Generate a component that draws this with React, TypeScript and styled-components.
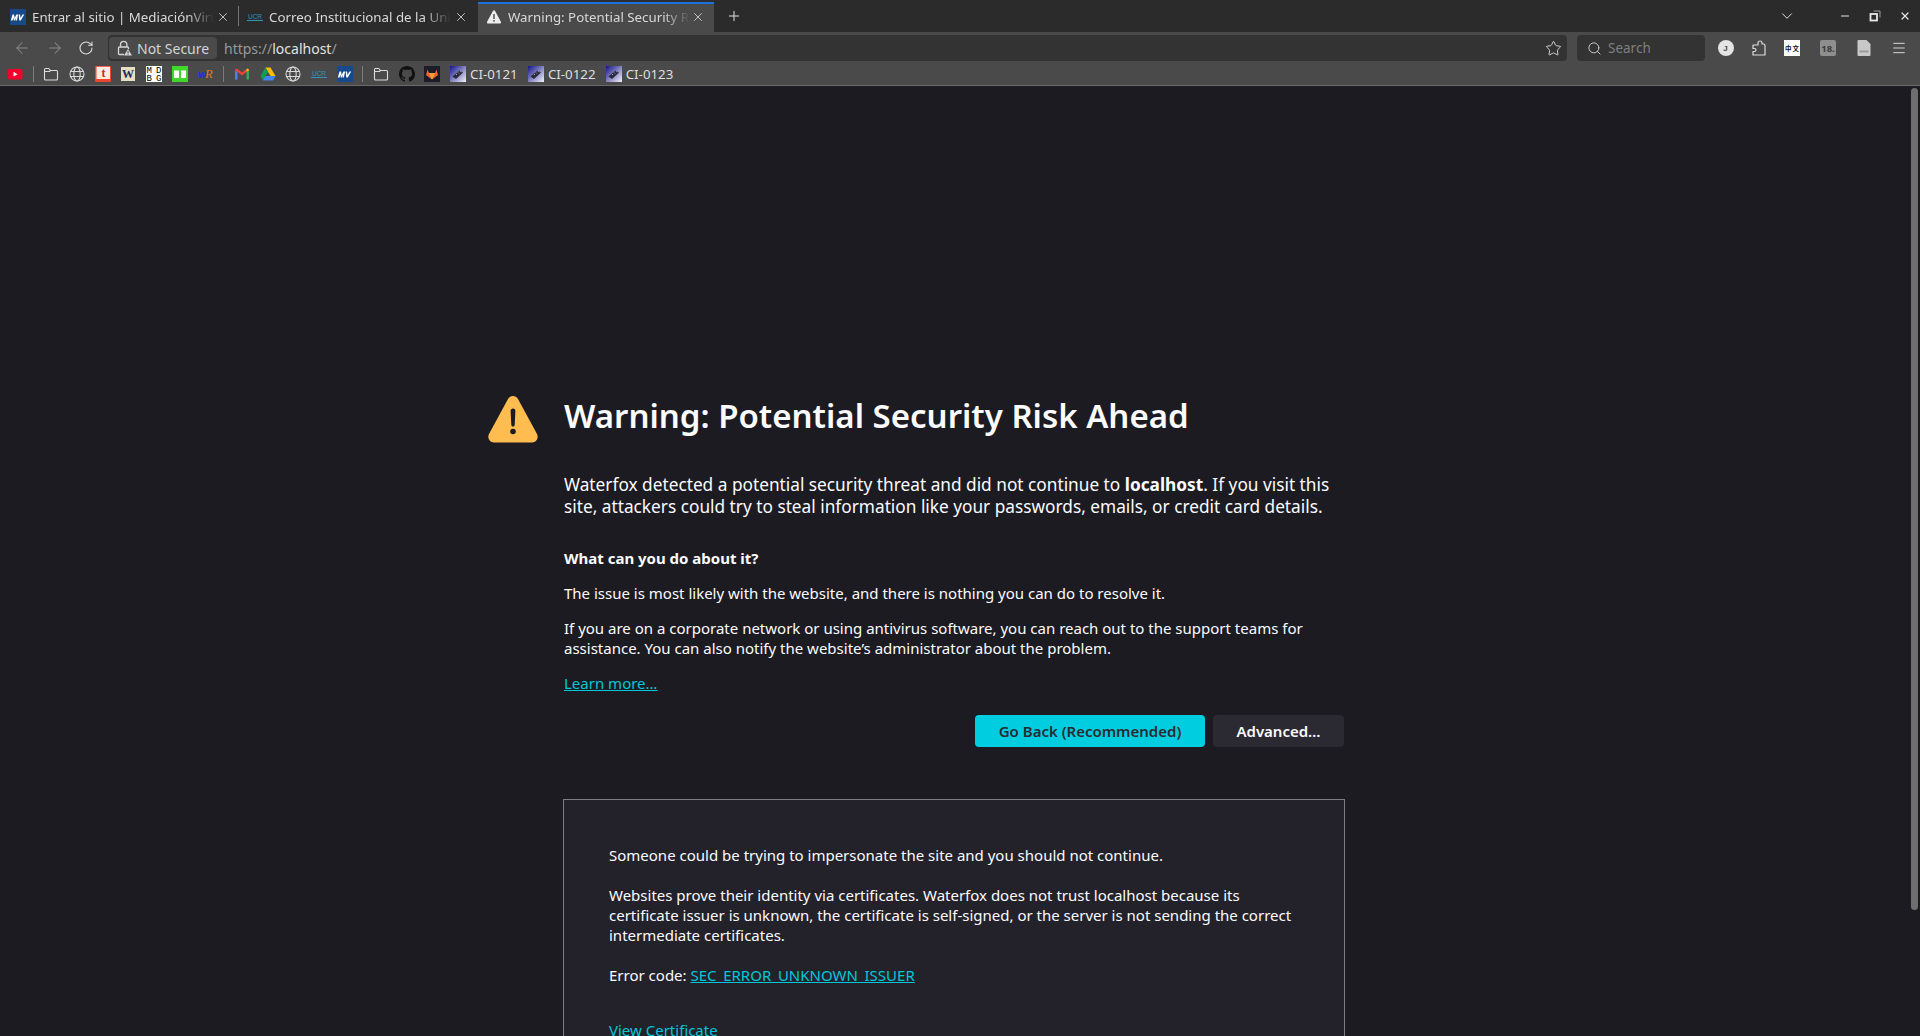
import * as React from "react";
import styled, { createGlobalStyle } from "styled-components";
import { ArrowLeft, ArrowRight, RotateCw, Star, Search, Menu, Plus, X, ChevronDown, Minus } from "lucide-react";

const GlobalStyle = createGlobalStyle`
  html, body { margin: 0; padding: 0; background: #1c1b22; }
  body { font-family: "Noto Sans", "Liberation Sans", sans-serif; }
  * { box-sizing: border-box; }
`;

const Window = styled.div`
  width: 1920px;
  height: 1036px;
  overflow: hidden;
  display: flex;
  flex-direction: column;
  background: #1c1b22;
`;

/* ---- tab strip ---- */
const TabStrip = styled.div`
  height: 32px;
  flex: none;
  display: flex;
  align-items: stretch;
  background: #2b2b2b;
  color: #d6d6d6;
  font-size: 13.3px;
`;

const Tab = styled.div<{ $active?: boolean; $w: number; $pl: number }>`
  width: ${({ $w }) => $w}px;
  padding-left: ${({ $pl }) => $pl}px;
  padding-bottom: 2px;
  display: flex;
  align-items: center;
  gap: 6px;
  flex: none;
  margin-top: 2px;
  background: ${({ $active }) => ($active ? "#4a4a4a" : "transparent")};
  border-top: 2px solid ${({ $active }) => ($active ? "#1a73e0" : "transparent")};
`;

const TabTitle = styled.span<{ $w: number }>`
  width: ${({ $w }) => $w}px;
  white-space: nowrap;
  overflow: hidden;
  flex: none;
  color: #d8d8d8;
  mask-image: linear-gradient(to right, #000 85%, transparent);
`;

const TabClose = styled.span<{ $ml: number }>`
  display: flex;
  margin-left: ${({ $ml }) => $ml}px;
  color: #d0d0d0;
`;

const TabDivider = styled.div`
  width: 1px;
  height: 20px;
  align-self: center;
  margin-right: 8px;
  background: #777;
  flex: none;
`;

const NewTab = styled.div`
  margin-left: 12px;
  display: flex;
  align-items: center;
  color: #e0e0e0;
`;

const WindowControls = styled.div`
  margin-left: auto;
  display: flex;
  align-items: center;
  color: #e4e4e4;
`;

const ControlSlot = styled.span<{ $mr?: number }>`
  width: 30px;
  margin-right: ${({ $mr }) => $mr ?? 0}px;
  display: flex;
  justify-content: center;
`;

/* ---- nav bar ---- */
const NavBar = styled.div`
  height: 32px;
  flex: none;
  display: flex;
  align-items: center;
  background: #4a4a4a;
  color: #d8d8d8;
`;

const NavButton = styled.span<{ $dim?: boolean; $w: number }>`
  width: ${({ $w }) => $w}px;
  display: flex;
  justify-content: center;
  flex: none;
  color: ${({ $dim }) => ($dim ? "#8a8a8a" : "#dcdcdc")};
`;

const UrlBar = styled.div`
  width: 1459px;
  height: 26px;
  margin-left: 2px;
  flex: none;
  display: flex;
  align-items: center;
  padding: 0 5px 0 1px;
  border-radius: 4px;
  background: #333333;
  font-size: 14px;
`;

const SecurityChip = styled.div`
  width: 108px;
  height: 22px;
  display: flex;
  align-items: center;
  gap: 5px;
  padding-left: 8px;
  border-radius: 4px;
  background: #4a4a4a;
  color: #d4d4d4;
  flex: none;
`;

const UrlText = styled.div`
  margin-left: 7px;
  color: #9a9a9a;
  flex: 1;
  b { font-weight: 400; color: #e2e2e2; }
`;

const SearchBox = styled.div`
  width: 128px;
  height: 26px;
  margin-left: 10px;
  flex: none;
  display: flex;
  align-items: center;
  gap: 6px;
  padding-left: 10px;
  border-radius: 4px;
  background: #333333;
  color: #7f7f7f;
  font-size: 13.5px;
  svg { color: #d0d0d0; }
`;

const ToolbarIcons = styled.div`
  display: flex;
  align-items: center;
  margin-left: 13px;
`;

const ToolbarSlot = styled.span<{ $mr: number }>`
  display: flex;
  margin-right: ${({ $mr }) => $mr}px;
  flex: none;
`;

/* ---- bookmarks ---- */
const BookmarkBar = styled.div`
  height: 22px;
  flex: none;
  display: flex;
  align-items: center;
  gap: 9.7px;
  padding: 0 0 2px 7px;
  background: #4a4a4a;
  border-bottom: 1px solid #6b6b6b;
`;

const BookmarkSep = styled.span`
  width: 1px;
  height: 16px;
  background: #7c7c7c;
  flex: none;
`;

const NamedBookmark = styled.span`
  display: flex;
  align-items: center;
  gap: 4px;
  margin-right: 0.5px;
  font-size: 13.3px;
  color: #dedede;
`;

/* ---- page content ---- */
const ContentRow = styled.div`
  flex: 1;
  min-height: 0;
  display: flex;
`;

const Page = styled.main`
  flex: 1;
  min-width: 0;
  padding-top: 306px;
  display: flex;
  justify-content: center;
  color: #fbfbfe;
`;

const Column = styled.div`
  width: 780px;
  font-size: 15px;
  line-height: 20px;
`;

const TitleRow = styled.div`
  display: flex;
  align-items: center;
  gap: 26px;
  margin-left: -76px;
`;

const WarningSlot = styled.span`
  display: flex;
  flex: none;
  margin: 4px 0 -3px;
`;

const Title = styled.h1`
  margin: 0;
  font-size: 33px;
  line-height: 40px;
  font-weight: 600;
  color: #fbfbfe;
`;

const Intro = styled.p`
  margin: 34px 0 0;
  font-size: 17.25px;
  line-height: 22px;
  b { font-weight: 700; }
`;

const Heading = styled.p`
  margin: 30px 0 0;
  font-weight: 700;
`;

const Para = styled.p`
  margin: 15px 0 0;
`;

const Link = styled.a`
  color: #00c8d8;
  text-decoration: underline;
`;

const PlainLink = styled.a`
  color: #00c8d8;
`;

const ButtonRow = styled.div`
  margin-top: 22px;
  display: flex;
  justify-content: flex-end;
  gap: 8px;
`;

const Button = styled.button<{ $primary?: boolean; $w: number }>`
  width: ${({ $w }) => $w}px;
  height: 32px;
  border: none;
  border-radius: 4px;
  font-family: inherit;
  font-size: 15px;
  font-weight: 600;
  background: ${({ $primary }) => ($primary ? "#00cde0" : "#2b2a33")};
  color: ${({ $primary }) => ($primary ? "#2b2a33" : "#fbfbfe")};
`;

const Panel = styled.section`
  margin: 52px -1px 0;
  padding: 45px;
  border: 1px solid #7f7e85;
  background: #23222b;
`;

const PanelPara = styled.p<{ $mt?: number }>`
  margin: ${({ $mt }) => $mt ?? 20}px 0 0;
`;

const ScrollTrack = styled.div`
  width: 12px;
  flex: none;
  padding: 2px 2px 0 3px;
`;

const ScrollThumb = styled.div`
  height: 822px;
  border-radius: 4px;
  background: #6e6e6e;
`;

/* ---- drawn icons ---- */
const MvIcon = () => (
  <svg width="16" height="16" viewBox="0 0 16 16">
    <rect width="16" height="16" fill="#164a8c" />
    <path d="M.800 11.500l1.700-6h1.600l.5 3.400 1.900-3.400h1.600l-1.200 6H5.500l.6-2.700-1.400 2.700H3.800l-.4-2.700-.9 2.700zM8.600 5.500h1.500l.4 3.500 2-3.500h1.700l-3.400 6H9.300z" fill="#fff" />
  </svg>
);

const UcrIcon = () => (
  <svg width="16" height="16" viewBox="0 0 16 16">
    <text x="8" y="10" textAnchor="middle" fontSize="6.500" fontFamily="Liberation Sans" fill="#2f95bd">UCR</text>
    <rect x="0" y="11" width="16" height="1" fill="#2f95bd" />
  </svg>
);

const WarningGlyph = () => (
  <svg width="16" height="16" viewBox="0 0 16 16">
    <path d="M8 1.200c.5 0 .9.300 1.100.7l5.800 10.800c.4.800-.1 1.800-1.100 1.800H2.200c-1 0-1.500-1-1.100-1.800L6.900 1.900c.2-.4.600-.7 1.100-.7z" fill="#ededed" />
    <rect x="7.300" y="5" width="1.400" height="5" fill="#4a4a4a" />
    <circle cx="8" cy="11.800" r=".9" fill="#4a4a4a" />
  </svg>
);

const LockIcon = () => (
  <svg width="15" height="16" viewBox="0 0 15 16" fill="none">
    <path d="M3.500 7V4.500a3.200 3.200 0 0 1 6.400 0V7" stroke="#d6d6d6" strokeWidth="1.300" />
    <path d="M7 14.500H2.500a1 1 0 0 1-1-1V8a1 1 0 0 1 1-1h8a1 1 0 0 1 1 1v1" stroke="#d6d6d6" strokeWidth="1.300" />
    <path d="M11 9l4 6.500H7z" fill="#d6d6d6" />
    <rect x="10.600" y="11" width=".9" height="2.300" fill="#333" />
    <rect x="10.600" y="13.800" width=".9" height=".9" fill="#333" />
  </svg>
);

const FolderIcon = () => (
  <svg width="16" height="16" viewBox="0 0 16 16" fill="none" stroke="#dcdcdc" strokeWidth="1.100">
    <path d="M1.500 13V3.500a1 1 0 0 1 1-1h3.200l1.800 2h6a1 1 0 0 1 1 1V13a1 1 0 0 1-1 1h-11a1 1 0 0 1-1-1z" />
    <path d="M1.500 5.500h5l1-1" />
  </svg>
);

const GlobeIcon = () => (
  <svg width="16" height="16" viewBox="0 0 16 16" fill="none" stroke="#d8d8d8" strokeWidth="1.100">
    <circle cx="8" cy="8" r="7" />
    <ellipse cx="8" cy="8" rx="3.200" ry="7" />
    <path d="M1.500 5.500h13M1.500 10.500h13" />
  </svg>
);

const YoutubeIcon = () => (
  <svg width="16" height="16" viewBox="0 0 16 16">
    <rect x="0.500" y="3" width="15" height="10.500" rx="2.500" fill="#f5002b" />
    <path d="M6.500 5.800l4 2.400-4 2.400z" fill="#fff" />
  </svg>
);

const TumblrBook = () => (
  <svg width="16" height="16" viewBox="0 0 16 16">
    <rect x="0" y="0" width="16" height="16" rx="1" fill="#e9452f" />
    <rect x="1.500" y="0.800" width="13.500" height="12.200" fill="#f8ece2" />
    <text x="8.500" y="11" textAnchor="middle" fontSize="12" fontWeight="700" fontFamily="Liberation Serif" fill="#c8281c">t</text>
  </svg>
);

const WikiIcon = () => (
  <svg width="16" height="16" viewBox="0 0 16 16">
    <rect x="1" y="1" width="14" height="14" fill="#e6dfc0" />
    <text x="8" y="12" textAnchor="middle" fontSize="12" fontWeight="700" fontFamily="Liberation Serif" fill="#20286a">W</text>
  </svg>
);

const MdbgIcon = () => (
  <svg width="16" height="16" viewBox="0 0 16 16">
    <rect width="16" height="16" fill="#fff" />
    <text x="8" y="7" textAnchor="middle" fontSize="9" fontFamily="Liberation Mono" textLength="15" fill="#000">MD</text>
    <text x="8" y="15" textAnchor="middle" fontSize="9" fontFamily="Liberation Mono" textLength="15" fill="#000">BG</text>
  </svg>
);

const GreenIcon = () => (
  <svg width="16" height="16" viewBox="0 0 16 16">
    <rect width="16" height="16" fill="#3fd82a" />
    <rect x="2" y="4.500" width="5" height="7.500" fill="#fff" />
    <rect x="9" y="4.500" width="5" height="7.500" fill="#fff" />
  </svg>
);

const WrIcon = () => (
  <svg width="16" height="16" viewBox="0 0 16 16">
    <text x="0" y="12" fontSize="10.500" fontWeight="700" fontStyle="italic" fontFamily="Liberation Sans" fill="#2030e0">w</text>
    <text x="7" y="12" fontSize="12.500" fontStyle="italic" fontFamily="Liberation Serif" fill="#e07a20">R</text>
  </svg>
);

const GmailIcon = () => (
  <svg width="16" height="16" viewBox="0 0 16 16">
    <path d="M1 13.500V4.200L3.500 6v7.500z" fill="#4285f4" />
    <path d="M12.500 13.500V6L15 4.200v9.300z" fill="#34a853" />
    <path d="M1 4.200C1 2.800 2.500 2.200 3.500 3L8 6.500 12.500 3C13.500 2.200 15 2.800 15 4.200L12.500 6 8 9.500 3.500 6z" fill="#ea4335" />
    <path d="M12.500 3C13.500 2.200 15 2.800 15 4.200L12.500 6z" fill="#fbbc04" />
  </svg>
);

const DriveIcon = () => (
  <svg width="16" height="16" viewBox="0 0 16 16">
    <path d="M5.500 1.500h5L15.500 10h-5z" fill="#fbbc04" />
    <path d="M5.500 1.500L.5 10 3 14.500 8 6z" fill="#0f9d58" />
    <path d="M3 14.500h10L15.500 10H5.500z" fill="#4285f4" />
  </svg>
);

const GithubIcon = () => (
  <svg width="16" height="16" viewBox="0 0 16 16">
    <path
      fill="#111"
      d="M8 0C3.580 0 0 3.580 0 8c0 3.540 2.290 6.530 5.470 7.590.4.070.55-.17.55-.38 0-.19-.01-.82-.01-1.490-2.010.37-2.530-.49-2.690-.94-.09-.23-.48-.94-.82-1.130-.28-.15-.68-.52-.01-.53.630-.01 1.080.58 1.230.82.720 1.210 1.870.87 2.330.66.070-.52.280-.87.510-1.070-1.780-.2-3.640-.89-3.640-3.950 0-.87.310-1.590.820-2.150-.08-.2-.36-1.020.08-2.120 0 0 .67-.21 2.200.82.640-.18 1.320-.27 2-.27s1.360.09 2 .27c1.530-1.040 2.200-.82 2.200-.82.44 1.100.16 1.920.08 2.120.51.560.82 1.270.82 2.150 0 3.070-1.870 3.750-3.650 3.950.29.250.54.730.54 1.480 0 1.070-.01 1.930-.01 2.200 0 .210.150.460.550.380A8.010 8.010 0 0 0 16 8c0-4.420-3.580-8-8-8z"
    />
  </svg>
);

const GitlabIcon = () => (
  <svg width="16" height="16" viewBox="0 0 16 16">
    <rect width="16" height="16" fill="#1b1b2a" />
    <path d="M8 13.500L2 9l1.500-5.500L5 7h6l1.500-3.500L14 9z" fill="#f0642a" />
    <path d="M8 13.500L5 7h6z" fill="#f9a03a" />
  </svg>
);

const ChipIcon = () => (
  <svg width="16" height="16" viewBox="0 0 16 16">
    <defs>
      <linearGradient id="chipBg" x1="0" y1="0" x2="1" y2="1">
        <stop offset="0" stopColor="#141488" />
        <stop offset="1" stopColor="#f2f2fa" />
      </linearGradient>
    </defs>
    <rect width="16" height="16" fill="url(#chipBg)" />
    <path d="M2.500 10.500l7-6 3.500 2-7 6.500z" fill="#2a2a3a" />
    <path d="M6 8l1 1M8 6.500l1 1M10 5.200l1 1" stroke="#cfcfe8" strokeWidth=".8" />
  </svg>
);

const RestoreIcon = () => (
  <svg width="12" height="12" viewBox="0 0 12 12" fill="none">
    <rect x="1.500" y="4" width="6.500" height="6.500" stroke="#e8e8e8" strokeWidth="1.800" />
    <path d="M4.500 1h6.500v6.500" stroke="#9a9a9a" strokeWidth="1" />
  </svg>
);

const ProfileIcon = () => (
  <svg width="16" height="16" viewBox="0 0 16 16">
    <circle cx="8" cy="8" r="8" fill="#e4e4e4" />
    <text x="7.600" y="11" textAnchor="middle" fontSize="8" fontWeight="700" fontFamily="Liberation Sans" fill="#4a4a4a">J</text>
  </svg>
);

const ExtensionIcon = () => (
  <svg width="16" height="16" viewBox="0 0 16 16" fill="none" stroke="#dcdcdc" strokeWidth="1.200" strokeLinejoin="round">
    <path d="M1 15V11.500h1.500a1.500 1.500 0 0 0 0-3H1V5h5V3a2 2 0 0 1 4 0v1h1.500c.8 0 1.500.7 1.500 1.500V15z" />
  </svg>
);

const CjkIcon = () => (
  <svg width="16" height="16" viewBox="0 0 16 16">
    <rect width="16" height="16" fill="#fff" />
    <text x="1" y="10.500" fontSize="6.500" fontWeight="700" fontFamily="Noto Sans CJK SC" fill="#111">中</text>
    <text x="8.500" y="10.500" fontSize="6.500" fontWeight="700" fontFamily="Noto Sans CJK SC" fill="#111">文</text>
  </svg>
);

const CalendarIcon = () => (
  <svg width="16" height="16" viewBox="0 0 16 16">
    <rect width="16" height="16" rx="2" fill="#8e8e8e" />
    <text x="8" y="11.500" textAnchor="middle" fontSize="9.500" fontWeight="700" fontFamily="Noto Sans" fill="#3c3c3c">18.</text>
  </svg>
);

const PageIcon = () => (
  <svg width="16" height="16" viewBox="0 0 16 16">
    <path d="M1.500 1a1 1 0 0 1 1-1h8l4 4v11a1 1 0 0 1-1 1h-11a1 1 0 0 1-1-1z" fill="#c8c8c8" />
    <rect x="3.500" y="10.500" width="9" height="2" fill="#9a9a9a" />
  </svg>
);

const BigWarning = () => (
  <svg width="50" height="47" viewBox="0 0 50 47">
    <path
      d="M25 0c2.100 0 4 1.100 5 2.900l19 35.200c2 3.900-.7 8.400-5 8.400H6c-4.300 0-7-4.500-5-8.400L20 2.900C21 1.100 22.900 0 25 0z"
      fill="#ffbd4f"
    />
    <path d="M25 12.500c1.400 0 2.500 1.100 2.400 2.500L26.700 29c0 .9-.8 1.500-1.700 1.500s-1.700-.6-1.700-1.500L22.600 15c-.1-1.400 1-2.500 2.400-2.500z" fill="#1c1b22" />
    <circle cx="25" cy="35.500" r="2.800" fill="#1c1b22" />
  </svg>
);

const App = () => (
  <Window>
    <GlobalStyle />
    <TabStrip>
      <Tab $w={238} $pl={10}>
        <MvIcon />
        <TabTitle $w={182}>Entrar al sitio | MediaciónVirtual</TabTitle>
        <TabClose $ml={-4}>
          <X size={14} strokeWidth={1.5} />
        </TabClose>
      </Tab>
      <TabDivider />
      <Tab $w={231} $pl={0}>
        <UcrIcon />
        <TabTitle $w={182}>Correo Institucional de la Universidad</TabTitle>
        <TabClose $ml={-3}>
          <X size={14} strokeWidth={1.5} />
        </TabClose>
      </Tab>
      <Tab $active $w={236} $pl={8}>
        <WarningGlyph />
        <TabTitle $w={182}>Warning: Potential Security Risk Ahead</TabTitle>
        <TabClose $ml={-5}>
          <X size={14} strokeWidth={1.5} />
        </TabClose>
      </Tab>
      <NewTab>
        <Plus size={16} strokeWidth={1.5} />
      </NewTab>
      <WindowControls>
        <ControlSlot $mr={28}>
          <ChevronDown size={18} strokeWidth={1.3} />
        </ControlSlot>
        <ControlSlot>
          <Minus size={12} strokeWidth={2} />
        </ControlSlot>
        <ControlSlot>
          <RestoreIcon />
        </ControlSlot>
        <ControlSlot>
          <X size={12} strokeWidth={2.4} />
        </ControlSlot>
      </WindowControls>
    </TabStrip>

    <NavBar>
      <NavButton $dim $w={44}>
        <ArrowLeft size={18} strokeWidth={1.4} />
      </NavButton>
      <NavButton $dim $w={21}>
        <ArrowRight size={18} strokeWidth={1.4} />
      </NavButton>
      <NavButton $w={41}>
        <RotateCw size={16} strokeWidth={1.6} />
      </NavButton>
      <UrlBar>
        <SecurityChip>
          <LockIcon />
          Not Secure
        </SecurityChip>
        <UrlText>
          https://<b>localhost</b>/
        </UrlText>
        <Star size={17} strokeWidth={1.3} color="#dcdcdc" />
      </UrlBar>
      <SearchBox>
        <Search size={15} strokeWidth={1.5} />
        Search
      </SearchBox>
      <ToolbarIcons>
        <ToolbarSlot $mr={18}>
          <ProfileIcon />
        </ToolbarSlot>
        <ToolbarSlot $mr={16}>
          <ExtensionIcon />
        </ToolbarSlot>
        <ToolbarSlot $mr={20}>
          <CjkIcon />
        </ToolbarSlot>
        <ToolbarSlot $mr={20}>
          <CalendarIcon />
        </ToolbarSlot>
        <ToolbarSlot $mr={19}>
          <PageIcon />
        </ToolbarSlot>
        <ToolbarSlot $mr={0}>
          <Menu size={16} strokeWidth={1.4} color="#e0e0e0" />
        </ToolbarSlot>
      </ToolbarIcons>
    </NavBar>

    <BookmarkBar>
      <YoutubeIcon />
      <BookmarkSep />
      <FolderIcon />
      <GlobeIcon />
      <TumblrBook />
      <WikiIcon />
      <MdbgIcon />
      <GreenIcon />
      <WrIcon />
      <BookmarkSep />
      <GmailIcon />
      <DriveIcon />
      <GlobeIcon />
      <UcrIcon />
      <MvIcon />
      <BookmarkSep />
      <FolderIcon />
      <GithubIcon />
      <GitlabIcon />
      {["CI-0121", "CI-0122", "CI-0123"].map(name => (
        <NamedBookmark key={name}>
          <ChipIcon />
          {name}
        </NamedBookmark>
      ))}
    </BookmarkBar>

    <ContentRow>
      <Page>
        <Column>
          <TitleRow>
            <WarningSlot>
              <BigWarning />
            </WarningSlot>
            <Title>Warning: Potential Security Risk Ahead</Title>
          </TitleRow>
          <Intro>
            Waterfox detected a potential security threat and did not continue to <b>localhost</b>. If you visit this
            site, attackers could try to steal information like your passwords, emails, or credit card details.
          </Intro>
          <Heading>What can you do about it?</Heading>
          <Para>The issue is most likely with the website, and there is nothing you can do to resolve it.</Para>
          <Para>
            If you are on a corporate network or using antivirus software, you can reach out to the support teams for
            assistance. You can also notify the website’s administrator about the problem.
          </Para>
          <Para>
            <Link>Learn more…</Link>
          </Para>
          <ButtonRow>
            <Button $primary $w={230}>
              Go Back (Recommended)
            </Button>
            <Button $w={131}>Advanced…</Button>
          </ButtonRow>
          <Panel>
            <PanelPara $mt={0}>Someone could be trying to impersonate the site and you should not continue.</PanelPara>
            <PanelPara>
              Websites prove their identity via certificates. Waterfox does not trust localhost because its certificate
              issuer is unknown, the certificate is self-signed, or the server is not sending the correct intermediate
              certificates.
            </PanelPara>
            <PanelPara>
              Error code: <Link>SEC_ERROR_UNKNOWN_ISSUER</Link>
            </PanelPara>
            <PanelPara $mt={35}>
              <PlainLink>View Certificate</PlainLink>
            </PanelPara>
          </Panel>
        </Column>
      </Page>
      <ScrollTrack>
        <ScrollThumb />
      </ScrollTrack>
    </ContentRow>
  </Window>
);

export default App;
